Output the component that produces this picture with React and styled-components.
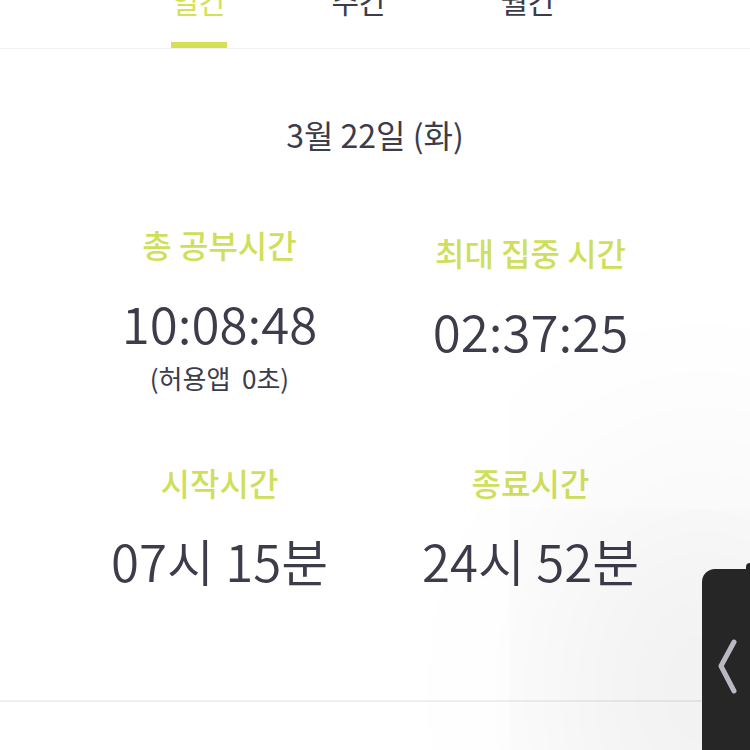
import React from "react";
import styled, { createGlobalStyle } from "styled-components";

const Global = createGlobalStyle`
  html, body { margin: 0; padding: 0; background: #ffffff; }
  body { font-family: "Noto Sans CJK KR", "Noto Sans", sans-serif; overflow: hidden; }
`;

const Page = styled.div`
  position: relative;
  width: 750px;
  height: 750px;
  overflow: hidden;
  background: #ffffff;
  display: flex;
  flex-direction: column;
`;

const Tabs = styled.div`
  display: flex;
  height: 49px;
  padding-left: 171px;
  gap: 104px;
  border-bottom: 1.5px solid #efeff4;
  box-sizing: border-box;
  & > div:last-child {
    margin-left: 9px;
  }
`;

const Tab = styled.div`
  position: relative;
  width: 56px;
  font-size: 30px;
  line-height: 1;
  margin-top: -15px;
  color: ${(p) => (p.$active ? "#d4e157" : "#3c3c4a")};
  text-align: center;
  white-space: nowrap;
  display: flex;
  justify-content: center;
  &::after {
    content: "";
    display: ${(p) => (p.$active ? "block" : "none")};
    position: absolute;
    left: 0;
    right: 0;
    top: 57px;
    height: 6px;
    background: #d4e157;
  }
`;

const DateLine = styled.div`
  margin-top: 65px;
  text-align: center;
  font-size: 32px;
  line-height: 40px;
  color: #3c3c4a;
`;

const Grid = styled.div`
  display: grid;
  grid-template-columns: 311px 311px;
  padding: 0 64px;
  row-gap: 68px;
  margin-top: 70px;
`;

const Cell = styled.div`
  display: flex;
  flex-direction: column;
  align-items: center;
  padding-top: ${(p) => p.$offset || 0}px;
`;

const Label = styled.div`
  font-size: 32px;
  line-height: 40px;
  color: #cfdf5b;
  font-weight: 500;
`;

const Value = styled.div`
  margin-top: 28px;
  font-size: 51px;
  line-height: 60px;
  color: #3c3c4a;
  font-weight: 350;
`;

const Sub = styled.div`
  margin-top: 10px;
  font-size: 26px;
  line-height: 32px;
  color: #3c3c4a;
  white-space: pre;
`;

const Divider = styled.div`
  margin-top: auto;
  margin-bottom: 48px;
  height: 2px;
  background: #efeff3;
`;

const Handle = styled.div`
  position: absolute;
  left: 702px;
  top: 569px;
  width: 80px;
  height: 260px;
  background: #262626;
  border-top-left-radius: 13px;
  box-shadow: -40px 0 240px 70px rgba(0, 0, 0, 0.09);
  display: flex;
  align-items: flex-start;
  padding-top: 70px;
  padding-left: 15px;
  box-sizing: border-box;
`;

const Bump = styled.div`
  position: absolute;
  left: 746px;
  top: 563px;
  width: 10px;
  height: 10px;
  background: #262626;
  border-top-left-radius: 4px;
`;

export default function App() {
  return (
    <Page>
      <Global />
      <Tabs>
        <Tab $active>일간</Tab>
        <Tab>주간</Tab>
        <Tab>월간</Tab>
      </Tabs>
      <DateLine>3월 22일 (화)</DateLine>
      <Grid>
        <Cell>
          <Label>총 공부시간</Label>
          <Value>10:08:48</Value>
          <Sub>(허용앱  0초)</Sub>
        </Cell>
        <Cell $offset={8}>
          <Label>최대 집중 시간</Label>
          <Value>02:37:25</Value>
        </Cell>
        <Cell>
          <Label>시작시간</Label>
          <Value>07시 15분</Value>
        </Cell>
        <Cell>
          <Label>종료시간</Label>
          <Value>24시 52분</Value>
        </Cell>
      </Grid>
      <Divider />
      <Handle>
        <svg width="22" height="56" viewBox="0 0 22 56">
          <path d="M17 3 L4 27 L17 52" fill="none" stroke="#b9b9c1" strokeWidth="5" strokeLinecap="round" strokeLinejoin="round" />
        </svg>
      </Handle>
      <Bump />
    </Page>
  );
}
